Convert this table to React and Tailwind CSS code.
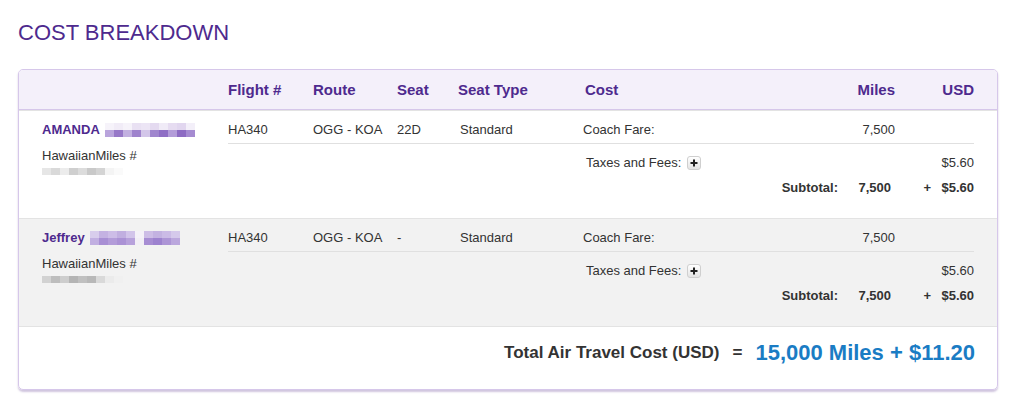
import React from "react";

const COLS = "grid grid-cols-[85px_84px_61px_127px_210px_100px_79px]";

function Pixels({ rows }) {
  return (
    <div className="flex flex-col">
      {rows.map((r, i) => (
        <div key={i} className="flex">
          {r.map((c, j) => (
            <div key={j} className={`w-[9px] h-[7px] ${c}`} />
          ))}
        </div>
      ))}
    </div>
  );
}

const amandaName = [
  ["bg-[#f6f3fa]", "bg-[#f1ecf7]", "bg-[#f6f3fa]", "bg-[#e9e1f3]", "bg-[#ece5f5]", "bg-[#e4daf0]", "bg-[#f0ebf7]", "bg-[#e6dcf1]", "bg-[#e1d6ef]", "bg-[#f3eff9]"],
  ["bg-[#b9a4dc]", "bg-[#9778c8]", "bg-[#c2b0e0]", "bg-[#9f83cd]", "bg-[#d3c6e9]", "bg-[#a086ce]", "bg-[#8f6ec5]", "bg-[#b39cd9]", "bg-[#8d6bc3]", "bg-[#a58bd1]"],
];
const jeffName = [
  ["bg-[#d8cdec]", "bg-[#c4b2e2]", "bg-[#cdbde7]", "bg-[#c1afe0]", "bg-[#d2c4ea]", "bg-[#f4f1f8]", "bg-[#cdbde6]", "bg-[#c3b2e1]", "bg-[#cbbbe6]", "bg-[#d5c9eb]"],
  ["bg-[#c1afe1]", "bg-[#a88fd4]", "bg-[#b39cd9]", "bg-[#ab92d5]", "bg-[#b7a1db]", "bg-[#f1eef5]", "bg-[#a78dd3]", "bg-[#9d82cf]", "bg-[#ad95d6]", "bg-[#bba7dd]"],
];
const amandaNum = [
  ["bg-[#e6e6e6]", "bg-[#d9d9d9]", "bg-[#ececec]", "bg-[#cfcfcf]", "bg-[#dcdcdc]", "bg-[#c9c9c9]", "bg-[#d4d4d4]", "bg-[#f4f4f4]", "bg-[#fafafa]"],
];
const jeffNum = [
  ["bg-[#d2d2d2]", "bg-[#bdbdbd]", "bg-[#cdcdcd]", "bg-[#b4b4b4]", "bg-[#c0c0c0]", "bg-[#b8b8b8]", "bg-[#d9d9d9]", "bg-[#ebebeb]", "bg-[#f0f0f0]"],
];

function PlusButton() {
  return (
    <span className="inline-flex items-center justify-center w-[14px] h-[14px] ml-[6px] border border-[#cfcfcf] rounded-[3px] bg-gradient-to-b from-white to-[#e4e4e4] align-middle">
      <svg width="8" height="8" viewBox="0 0 8 8">
        <rect x="3" y="0.5" width="2" height="7" fill="#222" />
        <rect x="0.5" y="3" width="7" height="2" fill="#222" />
      </svg>
    </span>
  );
}

function PassengerRow({ first, nameBlur, numBlur, seat, shaded }) {
  return (
    <div className={`flex pl-[23px] pr-[23px] pt-[9px] pb-[20px] border-t border-[#e3e3e3] ${shaded ? "bg-[#f2f2f2]" : "bg-white"}`}>
      <div className="w-[186px] shrink-0">
        <div className="flex items-center h-[20px]">
          <span className="font-bold text-[#4e2a8e]">{first}</span>
          <span className="ml-[5px]">
            <Pixels rows={nameBlur} />
          </span>
        </div>
        <div className="mt-[8px] leading-[16px]">HawaiianMiles #</div>
        <div className="mt-[4px]">
          <Pixels rows={numBlur} />
        </div>
      </div>
      <div className="flex-1">
        <div className={`${COLS} h-[20px] items-center border-b border-[#e0e0e0] pb-[3px] box-content`}>
          <div>HA340</div>
          <div>OGG - KOA</div>
          <div>{seat}</div>
          <div className="pl-[2px]">Standard</div>
          <div className="-ml-[2px]">Coach Fare:</div>
          <div className="text-right">7,500</div>
          <div />
        </div>
        <div className={`${COLS} h-[20px] items-center mt-[9px]`}>
          <div className="col-span-4" />
          <div className="flex items-center pl-[1px]">
            Taxes and Fees:
            <PlusButton />
          </div>
          <div />
          <div className="text-right">$5.60</div>
        </div>
        <div className="flex justify-end items-center h-[20px] mt-[5px] font-bold">
          <span>Subtotal:</span>
          <span className="w-[53px] text-right">7,500</span>
          <span className="w-[40px] text-right">+</span>
          <span className="w-[43px] text-right">$5.60</span>
        </div>
      </div>
    </div>
  );
}

export default function App() {
  return (
    <div className="w-[1024px] h-[413px] bg-white px-[18px] pt-[20px] font-['Liberation_Sans',Arial,sans-serif] text-[#333] text-[13px] leading-[20px]">
      <h1 className="text-[22px] leading-[26px] text-[#4e2a8e] font-normal">COST BREAKDOWN</h1>
      <div className="mt-[23px] w-[980px] border border-[#d6c7ea] rounded-[5px] shadow-[0_2px_2px_rgba(120,90,160,0.35)] overflow-hidden">
        <div className="flex h-[39px] items-center pl-[23px] pr-[23px] bg-[#f4f0fa] text-[15px] font-bold text-[#4e2a8e]">
          <div className="w-[186px] shrink-0" />
          <div className={`flex-1 ${COLS}`}>
            <div>Flight #</div>
            <div>Route</div>
            <div>Seat</div>
            <div>Seat Type</div>
            <div>Cost</div>
            <div className="text-right">Miles</div>
            <div className="text-right">USD</div>
          </div>
        </div>
        <div className="border-t border-[#d6c7ea]">
          <PassengerRow first="AMANDA" nameBlur={amandaName} numBlur={amandaNum} seat="22D" />
        </div>
        <PassengerRow first="Jeffrey" nameBlur={jeffName} numBlur={jeffNum} seat="-" shaded />
        <div className="flex justify-end items-center border-t border-[#e3e3e3] pt-[14px] pb-[24px] pr-[22px] h-[63px]">
          <span className="text-[17px] font-bold text-[#333]">Total Air Travel Cost (USD)</span>
          <span className="text-[17px] font-bold text-[#333] ml-[13px]">=</span>
          <span className="text-[22px] font-bold text-[#1a7cc4] ml-[13px] leading-[26px]">15,000 Miles + $11.20</span>
        </div>
      </div>
    </div>
  );
}
